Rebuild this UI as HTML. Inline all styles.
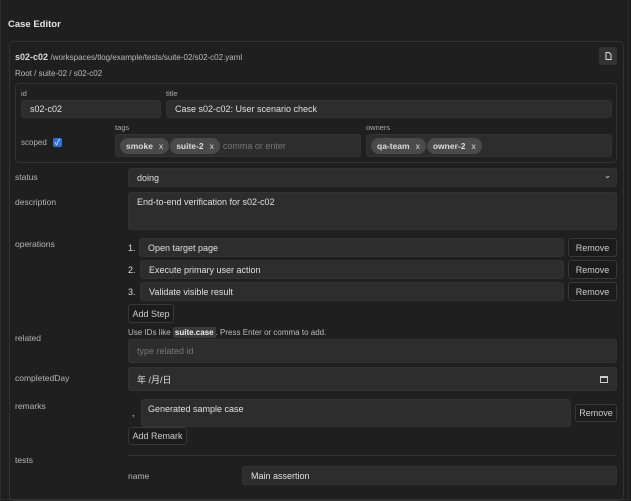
<!DOCTYPE html>
<html><head><meta charset="utf-8"><style>
*{box-sizing:border-box;margin:0;padding:0}
body{width:631px;height:490px;background:#1b1b1b;font-family:"Liberation Sans","Noto Sans CJK SC",sans-serif;font-size:9px;color:#ddd;position:relative;overflow:hidden}
.a{position:absolute}
.frame{left:0;top:0;width:629px;height:500px;background:#1f1f1f;border:1px solid #2e2e2e;border-top:none}
.card{left:9px;top:41px;width:615px;height:460px;border:1px solid #333;border-radius:5px}
.lbl{color:#b5b5b5;font-size:8.5px}
.sm{color:#aaa;font-size:7.5px}
.in{background:#2d2d2d;border:1px solid #333;border-radius:3px;padding-left:8px;display:flex;align-items:center;color:#e0e0e0;font-size:9px}
.btn{border:1px solid #383838;border-radius:3px;background:#1c1c1c;display:flex;align-items:center;justify-content:center;color:#ccc;font-size:9px}
.chip{background:#4a4a4a;border-radius:8px;padding:3px 6px;margin-right:1px;color:#ddd;font-weight:bold;font-size:8.5px}
.chip i{font-style:normal;font-weight:normal;margin-left:6px}
</style></head><body>
<div class="a frame"></div>
<div class="a" style="left:8px;top:19px;font-weight:bold;font-size:9.5px;color:#e6e6e6">Case Editor</div>
<div class="a card"></div>
<div class="a" style="left:15px;top:52px;font-size:9px"><b>s02-c02</b> <span style="font-size:8px;color:#bbb">/workspaces/tlog/example/tests/suite-02/s02-c02.yaml</span></div>
<div class="a" style="left:599px;top:47px;width:18px;height:18px;background:#333;border-radius:3px"><svg width="18" height="18"><path d="M7 5.5h3l2 2v5h-5z" fill="none" stroke="#ddd" stroke-width="1"/></svg></div>
<div class="a" style="left:15px;top:69px;font-size:8px;color:#bbb">Root / suite-02 / s02-c02</div>
<div class="a" style="left:15px;top:83px;width:602px;height:80px;border:1px solid #333;border-radius:4px"></div>
<div class="a sm" style="left:21px;top:89px">id</div>
<div class="a in" style="left:21px;top:100px;width:140px;height:18px">s02-c02</div>
<div class="a sm" style="left:166px;top:89px">title</div>
<div class="a in" style="left:166px;top:100px;width:446px;height:18px">Case s02-c02: User scenario check</div>
<div class="a lbl" style="left:21px;top:138px;font-size:8px">scoped</div>
<div class="a" style="left:53px;top:138px;width:9px;height:9px;background:#2f6fe0;border-radius:2px;color:#fff;font-size:8px;line-height:9px;text-align:center">✓</div>
<div class="a sm" style="left:115px;top:123px">tags</div>
<div class="a in" style="left:115px;top:134px;width:246px;height:23px;padding-left:4px"><span class="chip">smoke<i>x</i></span><span class="chip">suite-2<i>x</i></span><span style="color:#777;margin-left:2px">comma or enter</span></div>
<div class="a sm" style="left:366px;top:123px">owners</div>
<div class="a in" style="left:366px;top:134px;width:246px;height:23px;padding-left:4px"><span class="chip">qa-team<i>x</i></span><span class="chip">owner-2<i>x</i></span></div>
<div class="a lbl" style="left:15px;top:172px">status</div>
<div class="a in" style="left:128px;top:168px;width:489px;height:19px">doing<span style="position:absolute;right:5px;top:2px;font-size:8px">⌄</span></div>
<div class="a lbl" style="left:15px;top:197px">description</div>
<div class="a in" style="left:128px;top:192px;width:489px;height:38px;align-items:flex-start;padding-top:4px">End-to-end verification for s02-c02</div>
<div class="a lbl" style="left:15px;top:239px">operations</div>
<div class="a" style="left:128px;top:243px">1.</div>
<div class="a in" style="left:139px;top:238px;width:425px;height:19px">Open target page</div>
<div class="a btn" style="left:568px;top:238px;width:49px;height:19px">Remove</div>
<div class="a" style="left:128px;top:265px">2.</div>
<div class="a in" style="left:140px;top:260px;width:424px;height:19px">Execute primary user action</div>
<div class="a btn" style="left:568px;top:260px;width:49px;height:19px">Remove</div>
<div class="a" style="left:128px;top:287px">3.</div>
<div class="a in" style="left:140px;top:282px;width:424px;height:19px">Validate visible result</div>
<div class="a btn" style="left:568px;top:282px;width:49px;height:19px">Remove</div>
<div class="a btn" style="left:128px;top:304px;width:46px;height:19px">Add Step</div>
<div class="a lbl" style="left:15px;top:333px">related</div>
<div class="a" style="left:128px;top:328px;font-size:8px;color:#bbb">Use IDs like <span style="background:#3a3a3a;color:#eee;font-weight:bold;padding:1px 2px;border-radius:2px">suite.case</span>. Press Enter or comma to add.</div>
<div class="a in" style="left:128px;top:339px;width:489px;height:24px;color:#777">type related id</div>
<div class="a lbl" style="left:15px;top:373px">completedDay</div>
<div class="a in" style="left:128px;top:367px;width:489px;height:24px">年 /月/日<span style="position:absolute;right:8px;width:8px;height:7px;border:1px solid #ccc;border-top-width:2px"></span></div>
<div class="a lbl" style="left:15px;top:401px">remarks</div>
<div class="a" style="left:132px;top:408px">,</div>
<div class="a in" style="left:141px;top:399px;width:430px;height:28px;align-items:flex-start;padding-top:4px;padding-left:6px">Generated sample case</div>
<div class="a btn" style="left:575px;top:404px;width:42px;height:18px">Remove</div>
<div class="a btn" style="left:128px;top:427px;width:59px;height:18px">Add Remark</div>
<div class="a" style="left:128px;top:455px;width:489px;height:1px;background:#333"></div>
<div class="a lbl" style="left:15px;top:455px">tests</div>
<div class="a lbl" style="left:128px;top:471px">name</div>
<div class="a in" style="left:242px;top:466px;width:375px;height:19px">Main assertion</div>
</body></html>
